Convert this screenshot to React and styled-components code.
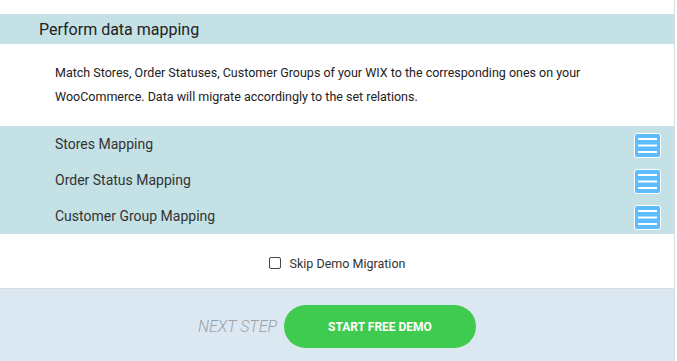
import React, { useState } from "react";
import styled, { createGlobalStyle } from "styled-components";

const GlobalStyle = createGlobalStyle`
  html, body {
    margin: 0;
    padding: 0;
    background: #ffffff;
  }
  body {
    font-family: Roboto, "Liberation Sans", Arial, sans-serif;
  }
`;

const MAPPINGS = ["Stores Mapping", "Order Status Mapping", "Customer Group Mapping"];

const MenuIcon = () => (
  <svg width="27" height="25" viewBox="0 0 27 25">
    <rect x="0.5" y="0.5" width="26" height="24" rx="2.5" fill="#5bbdfd" stroke="#ffffff" />
    <rect x="4" y="5" width="19" height="2" fill="#ffffff" />
    <rect x="4" y="11.5" width="19" height="2" fill="#ffffff" />
    <rect x="4" y="18" width="19" height="2" fill="#ffffff" />
  </svg>
);

const App = () => {
  const [skip, setSkip] = useState(false);
  return (
    <Page>
      <GlobalStyle />
      <Header>Perform data mapping</Header>
      <Description>
        Match Stores, Order Statuses, Customer Groups of your WIX to the corresponding ones on your
        WooCommerce. Data will migrate accordingly to the set relations.
      </Description>
      <MappingList>
        {MAPPINGS.map((name) => (
          <MappingRow key={name}>
            <MappingLabel>{name}</MappingLabel>
            <IconButton>
              <MenuIcon />
            </IconButton>
          </MappingRow>
        ))}
      </MappingList>
      <SkipRow>
        <SkipLabel>
          <Check type="checkbox" checked={skip} onChange={() => setSkip(!skip)} />
          Skip Demo Migration
        </SkipLabel>
      </SkipRow>
      <Footer>
        <NextStep>NEXT STEP</NextStep>
        <StartButton>START FREE DEMO</StartButton>
      </Footer>
    </Page>
  );
};

export default App;

const Page = styled.div`
  width: 675px;
  height: 361px;
  padding-top: 14px;
  box-sizing: border-box;
  border-right: 1px solid #dcdcdc;
  display: flex;
  flex-direction: column;
`;

const Header = styled.div`
  height: 30px;
  background: #c4e1e5;
  padding-left: 39px;
  display: flex;
  align-items: center;
  font-size: 16px;
  color: #222;
`;

const Description = styled.div`
  padding: 17px 40px 17px 55px;
  font-size: 12.5px;
  line-height: 24px;
  color: #222;
`;

const MappingList = styled.div`
  background: #c4e1e5;
  display: flex;
  flex-direction: column;
`;

const MappingRow = styled.div`
  height: 36px;
  display: flex;
  align-items: center;
  justify-content: space-between;
  padding: 0 13px 0 55px;
`;

const MappingLabel = styled.span`
  font-size: 14px;
  color: #333;
`;

const IconButton = styled.div`
  display: flex;
  margin-top: 3px;
  cursor: pointer;
`;

const SkipRow = styled.div`
  height: 54px;
  border-bottom: 1px solid #d3dee6;
  display: flex;
  align-items: center;
  justify-content: center;
`;

const SkipLabel = styled.label`
  display: flex;
  align-items: center;
  gap: 9px;
  font-size: 12.5px;
  color: #333;
  margin-top: 4px;
`;

const Check = styled.input`
  appearance: none;
  width: 12px;
  height: 12px;
  margin: 0;
  border: 1px solid #444;
  border-radius: 2px;
  background: #fff;
`;

const Footer = styled.div`
  flex: 1;
  background: #dce8f1;
  display: flex;
  justify-content: center;
  align-items: flex-start;
  padding-top: 16px;
  gap: 7px;
`;

const NextStep = styled.span`
  font-size: 16px;
  font-style: italic;
  font-weight: 300;
  color: #98a2ab;
  line-height: 43px;
`;

const StartButton = styled.button`
  width: 192px;
  height: 43px;
  border: none;
  border-radius: 22px;
  background: #3fcb4f;
  color: #fff;
  font-family: Roboto, "Liberation Sans", Arial, sans-serif;
  font-size: 12px;
  font-weight: 700;
  cursor: pointer;
`;
